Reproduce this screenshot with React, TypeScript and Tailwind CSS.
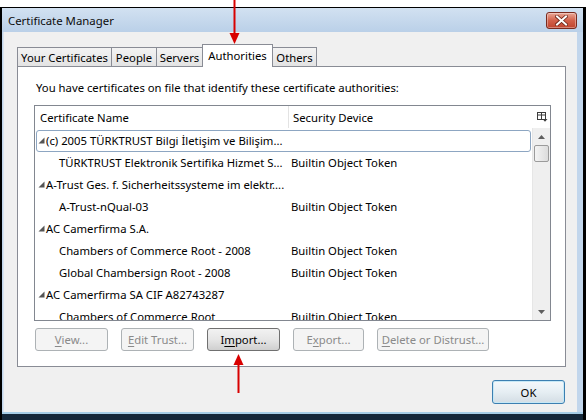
import React from "react";

type Row = { parent: boolean; name: string; device: string; focus?: boolean };

const rows: Row[] = [
  { parent: true, name: "(c) 2005 TÜRKTRUST Bilgi İletişim ve Bilişim...", device: "", focus: true },
  { parent: false, name: "TÜRKTRUST Elektronik Sertifika Hizmet S...", device: "Builtin Object Token" },
  { parent: true, name: "A-Trust Ges. f. Sicherheitssysteme im elektr....", device: "" },
  { parent: false, name: "A-Trust-nQual-03", device: "Builtin Object Token" },
  { parent: true, name: "AC Camerfirma S.A.", device: "" },
  { parent: false, name: "Chambers of Commerce Root - 2008", device: "Builtin Object Token" },
  { parent: false, name: "Global Chambersign Root - 2008", device: "Builtin Object Token" },
  { parent: true, name: "AC Camerfirma SA CIF A82743287", device: "" },
  { parent: false, name: "Chambers of Commerce Root", device: "Builtin Object Token" },
];

function Twisty() {
  return (
    <svg width="7" height="7" viewBox="0 0 7 7" className="shrink-0">
      <polygon points="6.5,0.5 6.5,6.5 0.5,6.5" fill="#555555" />
    </svg>
  );
}

function CloseButton() {
  return (
    <div className="w-[31px] h-[17px] rounded-[3px] border border-[#7a2a1e] bg-gradient-to-b from-[#e9a797] via-[#d2604a] to-[#c0442e] flex items-center justify-center shadow-[inset_0_0_0_1px_rgba(255,255,255,0.35)]">
      <svg width="13" height="11" viewBox="0 0 13 11">
        <path d="M2 1.5 L11 9.5 M11 1.5 L2 9.5" stroke="#6b2216" strokeWidth="3.6" strokeLinecap="square" />
        <path d="M2 1.5 L11 9.5 M11 1.5 L2 9.5" stroke="#ffffff" strokeWidth="2" strokeLinecap="square" />
      </svg>
    </div>
  );
}

function Tab({ label, w, selected }: { label: string; w: string; selected?: boolean }) {
  if (selected) {
    return (
      <div className={`${w} -ml-px h-[23px] relative z-10 mb-[-1px] bg-white border border-b-0 border-[#898c95] flex items-center justify-center pb-[2px]`}>
        {label}
      </div>
    );
  }
  return (
    <div className={`${w} -ml-px first:ml-0 h-[19px] bg-gradient-to-b from-[#f3f3f3] to-[#e3e3e3] border border-b-0 border-[#898c95] flex items-center justify-center`}>
      {label}
    </div>
  );
}

function Btn({
  pre,
  u,
  post,
  w,
  disabled,
}: {
  pre: string;
  u: string;
  post: string;
  w: string;
  disabled?: boolean;
}) {
  const cls = disabled
    ? "border-[#adb2b5] bg-[#f4f4f4] text-[#8a8a8a]"
    : "border-[#707070] bg-gradient-to-b from-[#f2f2f2] via-[#e6e6e6] to-[#cfcfcf] text-black";
  return (
    <div className={`${w} h-[23px] rounded-[3px] border ${cls} flex items-center justify-center`}>
      <span>
        {pre}
        <span className="underline underline-offset-[2px]">{u}</span>
        {post}
      </span>
    </div>
  );
}

function ColPicker() {
  return (
    <svg width="11" height="10" viewBox="0 0 11 10">
      <rect x="0.5" y="0.5" width="8" height="7" fill="none" stroke="#3c3c3c" />
      <line x1="0.5" y1="3" x2="8.5" y2="3" stroke="#3c3c3c" />
      <line x1="4.5" y1="0.5" x2="4.5" y2="7.5" stroke="#3c3c3c" />
      <polygon points="5.5,7 10.5,7 8,9.8" fill="#3c3c3c" />
    </svg>
  );
}

export default function App() {
  return (
    <div className="relative w-[586px] h-[420px] overflow-hidden bg-white font-['Noto_Sans',sans-serif] text-[11.3px] leading-[15px] text-black">
      <div className="pt-[7px] h-full">
        <div className="h-[413px] flex flex-col border-l-[2px] border-t border-r-[3px] border-black bg-[#c2d6ec]">
          {/* Title bar */}
          <div className="h-[24px] shrink-0 flex items-center justify-between pl-[6px] pr-[6px] bg-gradient-to-b from-[#d2e1f1] to-[#bad0e8]">
            <span className="text-[11.4px] text-[#0c0c0c]">Certificate Manager</span>
            <CloseButton />
          </div>

          {/* Content */}
          <div className="flex-1 flex flex-col ml-[1px] mr-[6px] bg-[#f0f0f0] pt-[12px] pl-[13px] pr-[11px] border-l border-[#d9e4f0]">
            {/* Tabs */}
            <div className="flex items-end h-[22px]">
              <Tab label="Your Certificates" w="w-[95px]" />
              <Tab label="People" w="w-[46px]" />
              <Tab label="Servers" w="w-[47px]" />
              <Tab label="Authorities" w="w-[71px]" selected />
              <Tab label="Others" w="w-[45px]" />
            </div>

            {/* Panel */}
            <div className="h-[301px] bg-white border border-[#898c95] flex flex-col pl-[16px] pt-[13px]">
              <div className="pl-[2px]">
                You have certificates on file that identify these certificate authorities:
              </div>

              {/* Listbox */}
              <div className="mt-[10px] w-[517px] h-[216px] border border-[#828790] flex flex-col overflow-hidden">
                {/* Header */}
                <div className="h-[22px] shrink-0 flex items-stretch">
                  <div className="w-[254px] border-r border-[#e3e3e3] flex items-center pl-[5px]">Certificate Name</div>
                  <div className="w-[243px] flex items-center pl-[4px]">Security Device</div>
                  <div className="flex-1 flex items-center justify-center pl-[2px]">
                    <ColPicker />
                  </div>
                </div>
                {/* Body */}
                <div className="flex-1 flex min-h-0">
                  <div className="w-[497px] flex flex-col overflow-hidden pt-[1px]">
                    {rows.map((r, i) => (
                      <div key={i} className="relative h-[22px] shrink-0 flex items-center whitespace-nowrap">
                        {r.focus && (
                          <div className="absolute left-[1px] right-[1px] top-[1px] bottom-[-1px] rounded-[3px] border border-[#8da6c2]" />
                        )}
                        <div className="w-[254px] flex items-center overflow-hidden">
                          {r.parent ? (
                            <div className="flex items-center pl-[3px] gap-[1px]">
                              <Twisty />
                              <span>{r.name}</span>
                            </div>
                          ) : (
                            <span className="pl-[24px]">{r.name}</span>
                          )}
                        </div>
                        <div className="pl-[2px]">{r.device}</div>
                      </div>
                    ))}
                  </div>
                  {/* Scrollbar */}
                  <div className="flex-1 flex flex-col bg-[#efefef] border-l border-[#e6e6e6]">
                    <div className="h-[17px] flex items-center justify-center">
                      <svg width="7" height="4" viewBox="0 0 7 4">
                        <polygon points="3.5,0 7,4 0,4" fill="#5e5e5e" />
                      </svg>
                    </div>
                    <div className="mx-[1px] h-[17px] rounded-[2px] border border-[#9b9b9b] bg-gradient-to-r from-[#f4f4f4] to-[#dcdcdc]" />
                    <div className="flex-1" />
                    <div className="h-[17px] flex items-center justify-center">
                      <svg width="7" height="4" viewBox="0 0 7 4">
                        <polygon points="0,0 7,0 3.5,4" fill="#5e5e5e" />
                      </svg>
                    </div>
                  </div>
                </div>
              </div>

              {/* Buttons */}
              <div className="mt-[7px] flex items-center pl-[1px] gap-[13px]">
                <Btn pre="" u="V" post="iew..." w="w-[73px]" disabled />
                <Btn pre="" u="E" post="dit Trust..." w="w-[73px]" disabled />
                <Btn pre="I" u="m" post="port..." w="w-[73px]" />
                <Btn pre="E" u="x" post="port..." w="w-[71px]" disabled />
                <Btn pre="" u="D" post="elete or Distrust..." w="w-[112px]" disabled />
              </div>
            </div>

            {/* OK */}
            <div className="mt-[13px] flex justify-end pr-[1px]">
              <div className="w-[73px] h-[24px] rounded-[3px] border border-[#3c7fb1] bg-gradient-to-b from-[#f4f8fb] via-[#e6eef3] to-[#d3dde4] shadow-[inset_0_0_0_1px_#c6e8f6] flex items-center justify-center">
                OK
              </div>
            </div>
          </div>

          {/* Bottom frame */}
          <div className="h-[2px] shrink-0 bg-[#a6cde6]" />
          <div className="h-[6px] shrink-0 bg-[#15283a]" />
        </div>
      </div>

      {/* Red arrows */}
      <svg className="absolute left-[229px] top-0" width="11" height="44" viewBox="0 0 11 44">
        <line x1="5.5" y1="0" x2="5.5" y2="35" stroke="#d80000" strokeWidth="2" />
        <polygon points="0.5,33 10.5,33 5.5,44" fill="#d80000" />
      </svg>
      <svg className="absolute left-[233px] top-[354px]" width="11" height="40" viewBox="0 0 11 40">
        <polygon points="5.5,0 10.5,11 0.5,11" fill="#d80000" />
        <line x1="5.5" y1="9" x2="5.5" y2="39" stroke="#d80000" strokeWidth="2" />
      </svg>
    </div>
  );
}
